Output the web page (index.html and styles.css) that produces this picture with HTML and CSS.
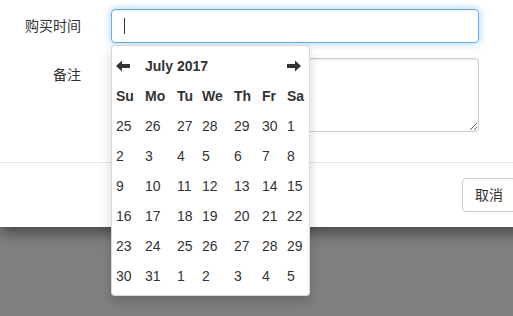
FILE: index.html
```html
<!DOCTYPE html>
<html lang="zh">
<head>
<meta charset="utf-8">
<link rel="stylesheet" href="styles.css">
</head>
<body>
<div class="modal">
  <div class="modal-body">
    <div class="form-group">
      <label class="label">购买时间</label>
      <div class="control">
        <div class="input focused"><span class="caret"></span></div>
        <div class="picker">
          <div class="cal">
            <span class="nav"><svg width="14" height="12" viewBox="0 0 14 12"><path d="M0 6 L6 0.5 L6 4 L14 4 L14 8 L6 8 L6 11.5 Z" fill="#333"/></svg></span>
            <span class="month">July 2017</span>
            <span class="nav next"><svg width="14" height="12" viewBox="0 0 14 12"><path d="M14 6 L8 0.5 L8 4 L0 4 L0 8 L8 8 L8 11.5 Z" fill="#333"/></svg></span>
            <span class="dow">Su</span><span class="dow">Mo</span><span class="dow">Tu</span><span class="dow">We</span><span class="dow">Th</span><span class="dow">Fr</span><span class="dow">Sa</span>
            <span>25</span><span>26</span><span>27</span><span>28</span><span>29</span><span>30</span><span>1</span>
            <span>2</span><span>3</span><span>4</span><span>5</span><span>6</span><span>7</span><span>8</span>
            <span>9</span><span>10</span><span>11</span><span>12</span><span>13</span><span>14</span><span>15</span>
            <span>16</span><span>17</span><span>18</span><span>19</span><span>20</span><span>21</span><span>22</span>
            <span>23</span><span>24</span><span>25</span><span>26</span><span>27</span><span>28</span><span>29</span>
            <span>30</span><span>31</span><span>1</span><span>2</span><span>3</span><span>4</span><span>5</span>
          </div>
        </div>
      </div>
    </div>
    <div class="form-group">
      <label class="label">备注</label>
      <div class="control">
        <textarea class="textarea"></textarea>
      </div>
    </div>
  </div>
  <div class="modal-footer">
    <button class="btn">取消</button>
  </div>
</div>
</body>
</html>
```
FILE: styles.css
```css
html, body {
  margin: 0;
  padding: 0;
}
body {
  background: #808080;
  overflow: hidden;
  width: 513px;
  height: 316px;
  font-family: "Liberation Sans", "Noto Sans CJK SC", sans-serif;
  font-size: 14px;
  line-height: 20px;
  color: #333;
}
.modal {
  width: 531px;
  background: #fff;
  box-shadow: 0 5px 15px rgba(0, 0, 0, 0.5);
}
.modal-body {
  padding: 9px 0 15px;
}
.form-group {
  display: grid;
  grid-template-columns: 96px 368px;
  column-gap: 15px;
  margin-bottom: 15px;
}
.label {
  padding-top: 7px;
  padding-right: 15px;
  text-align: right;
  font-weight: normal;
  color: #333;
}
.control {
  position: relative;
}
.input {
  box-sizing: border-box;
  height: 34px;
  border: 1px solid #66afe9;
  border-radius: 4px;
  padding: 8px 12px 0;
  box-shadow: inset 0 1px 1px rgba(0, 0, 0, 0.075), 0 0 8px rgba(102, 175, 233, 0.6);
}
.caret {
  display: block;
  width: 1px;
  height: 16px;
  background: #333;
}
.textarea {
  display: block;
  box-sizing: border-box;
  width: 368px;
  height: 74px;
  margin: 0;
  border: 1px solid #ccc;
  border-radius: 4px;
  padding: 6px 12px;
  box-shadow: inset 0 1px 1px rgba(0, 0, 0, 0.075);
  font: inherit;
  outline: none;
}
.picker {
  position: absolute;
  left: 0;
  top: 36px;
  z-index: 10;
  box-sizing: border-box;
  width: 199px;
  padding: 5px 4px 4px;
  background: #fff;
  border: 1px solid rgba(0, 0, 0, 0.15);
  border-radius: 4px;
  box-shadow: 0 6px 12px rgba(0, 0, 0, 0.175);
}
.cal {
  display: grid;
  grid-template-columns: 29px 32px 25px 32px 28px 25px 1fr;
  grid-auto-rows: 30px;
  align-items: center;
}
.nav {
  display: flex;
  align-items: center;
  height: 12px;
}
.month {
  grid-column: 2 / span 5;
  font-weight: bold;
}
.dow {
  font-weight: bold;
}
.modal-footer {
  border-top: 1px solid #e5e5e5;
  padding: 15px;
  display: flex;
  justify-content: flex-end;
}
.btn {
  box-sizing: border-box;
  height: 34px;
  padding: 6px 12px;
  border: 1px solid #ccc;
  border-radius: 4px;
  background: #fff;
  color: #333;
  font: inherit;
}
```
